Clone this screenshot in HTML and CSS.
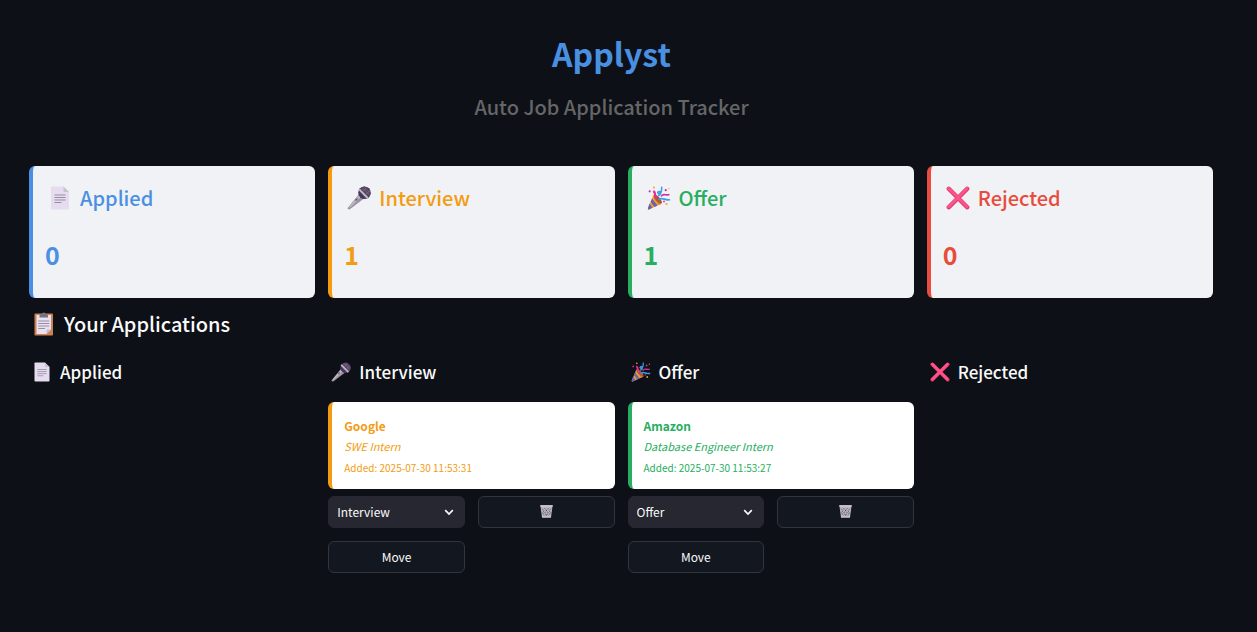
FILE: index.html
```
<!DOCTYPE html>
<html lang="en">
<head>
<meta charset="utf-8">
<meta name="viewport" content="width=device-width, initial-scale=1">
<title>Applyst</title>
<link rel="stylesheet" href="styles.css">
</head>
<body>
<svg class="sprite" aria-hidden="true">
  <symbol id="page" viewBox="0 0 24 24">
    <path d="M3 1.5Q3 .5 4 .5H15.500L21 6V22.500Q21 23.500 20 23.500H4Q3 23.500 3 22.500Z" fill="#e6dcef"/>
    <path d="M15.500.5 21 6H16.500Q15.500 6 15.500 5Z" fill="#c9c0d0"/>
    <path d="M6.500 9H17.500M6.500 11.500H17.500M6.500 14H17.500M6.500 16.500H13.500" stroke="#998ea4" stroke-width="1"/>
  </symbol>
  <symbol id="mic" viewBox="0 0 24 24">
    <path d="M1 21.500 12.500 7.500 17 12.500 3.500 22.800Q2 24 .8 22.800.3 22.300 1 21.500Z" fill="#9b92a2"/>
    <path d="M2 21 12.800 8.500 14.500 10.300 2.800 21.800Z" fill="#c2bcc7"/>
    <path d="M8.500 14.500 10.500 12.500" stroke="#655b70" stroke-width="1.400"/>
    <circle cx="17.500" cy="6.800" r="6.300" fill="#46355a"/>
    <path d="M12.500 3.500Q14.500.8 17.500.6L23.600 7Q23.300 10 21 12Z" fill="#57465f"/>
    <path d="M12.200 3.400 20.800 12.200" stroke="#c0b9c8" stroke-width="2"/>
    <path d="M15.500 2 22 8.500M18 1.500 23 6.500M16 5 20 1.500M19 8 23 4.500" stroke="#80708b" stroke-width=".7"/>
  </symbol>
  <symbol id="party" viewBox="0 0 24 24">
    <path d="M6.500 9Q12 11 15 17.500L2 23.500Q.5 24 1 22Z" fill="#f5a12b"/>
    <path d="M5 12.500 10.500 19.500 7.500 21 3.600 16ZM2.500 17.500 5.500 21.800 2 23.500Q.5 24 1 22Z" fill="#6763b5"/>
    <path d="M8 10.500 14 18 12 18.900 6.500 12Z" fill="#dd7f35"/>
    <ellipse cx="10.800" cy="13" rx="2.100" ry="5.600" transform="rotate(-43 10.800 13)" fill="#a75a35"/>
    <path d="M10 12.500C6 9 10 7.500 6.300 5" fill="none" stroke="#f02a91" stroke-width="2.200"/>
    <path d="M12 14C14 10 19 15.500 23 13.500" fill="none" stroke="#3a9de8" stroke-width="1.900"/>
    <path d="M14 10.500C16 6.500 19 10 22.500 8.500" fill="none" stroke="#cf329d" stroke-width="1.600"/>
    <path d="M11 10C15 8 14.500 5 12 5.500 9 6.500 12 9 14 6 15.300 4 14 2 15 .8" fill="none" stroke="#3a9de8" stroke-width="1.500"/>
    <circle cx="2.700" cy="5.300" r="1.100" fill="#d42d93"/><circle cx="7" cy="1.600" r="1" fill="#f5a12b"/>
    <circle cx="18.700" cy="4.200" r="1.100" fill="#d42d93"/><circle cx="22" cy="2.600" r=".7" fill="#f5a12b"/>
    <circle cx="19.500" cy="18" r="1.100" fill="#f5a12b"/><circle cx="17" cy="15.500" r=".9" fill="#f02a91"/>
  </symbol>
  <symbol id="cross" viewBox="0 0 24 24">
    <path d="M2.800 2.800 21.200 21.200M21.200 2.800 2.800 21.200" stroke="#e63268" stroke-width="4.400" stroke-linecap="round"/>
    <path d="M2.800 2.500 21 20.700M21 2.500 2.800 20.700" stroke="#fa558a" stroke-width="3" stroke-linecap="round"/>
  </symbol>
  <symbol id="clipboard" viewBox="0 0 24 24">
    <rect x="2.500" y="1.500" width="18.500" height="22" rx="1" fill="#cf8050"/>
    <path d="M4.500 3H19V17.500L14.500 22H4.500Z" fill="#e9e1f0"/>
    <path d="M19 17.500H15.500Q14.500 17.500 14.500 18.500V22Z" fill="#c6b9d0"/>
    <path d="M7.500 5.500V3.500Q7.500 2.300 9.500 2.300 10 .5 11.800.5T14 2.300Q16 2.300 16 3.500V5.500Z" fill="#777080"/>
    <path d="M6.200 9H17.300M6.200 11.500H17.300M6.200 14H17.300M6.200 16.500H13" stroke="#998ea4"/>
  </symbol>
  <symbol id="bin" viewBox="0 0 16 16">
    <path d="M1.500 1.500H14.500L12.800 14.500H3.200Z" fill="#b9b2c1"/>
    <path d="M3.300 5 5.300 7.200 3.800 9.500 5.500 12M6 4.500 8 7 6.200 9.500 8 12.200M12.700 5 10.700 7.200 12.200 9.500 10.500 12M10 4.500 8 7 9.800 9.500 8 12.200" fill="none" stroke="#514a5b" stroke-width="1" stroke-dasharray="1.600 1"/>
    <path d="M1.300 2H14.700" stroke="#d8d2de" stroke-width="1.400"/>
    <path d="M3.200 13.900H12.800" stroke="#d8d2de"/>
  </symbol>
  <symbol id="chevron" viewBox="0 0 10 10">
    <path d="M1.200 3.200 5 7 8.800 3.200" fill="none" stroke="currentColor" stroke-width="1.700"/>
  </symbol>
</svg>

<main class="page">
  <header class="masthead">
    <h1 class="brand">Applyst</h1>
    <h3 class="tagline">Auto Job Application Tracker</h3>
  </header>

  <section class="columns" aria-label="Totals">
    <article class="metric applied">
      <h3 class="metric-title"><svg class="emoji"><use href="#page"/></svg>Applied</h3>
      <p class="metric-value">0</p>
    </article>
    <article class="metric interview">
      <h3 class="metric-title"><svg class="emoji"><use href="#mic"/></svg>Interview</h3>
      <p class="metric-value">1</p>
    </article>
    <article class="metric offer">
      <h3 class="metric-title"><svg class="emoji"><use href="#party"/></svg>Offer</h3>
      <p class="metric-value">1</p>
    </article>
    <article class="metric rejected">
      <h3 class="metric-title"><svg class="emoji"><use href="#cross"/></svg>Rejected</h3>
      <p class="metric-value">0</p>
    </article>
  </section>

  <h2 class="section-title"><svg class="emoji"><use href="#clipboard"/></svg>Your Applications</h2>

  <section class="columns" aria-label="Board">
    <div class="lane">
      <h4 class="lane-title"><svg class="emoji-small"><use href="#page"/></svg>Applied</h4>
    </div>
    <div class="lane">
      <h4 class="lane-title"><svg class="emoji-small"><use href="#mic"/></svg>Interview</h4>
      <article class="job interview">
        <strong class="company">Google</strong>
        <em class="role">SWE Intern</em>
        <small class="added">Added: 2025-07-30 11:53:31</small>
      </article>
      <div class="actions">
        <div class="picker">
          <select class="status" aria-label="Status for Google">
            <option>Applied</option><option selected>Interview</option><option>Offer</option><option>Rejected</option>
          </select>
          <svg class="chevron"><use href="#chevron"/></svg>
        </div>
        <button class="button" type="button" aria-label="Delete Google"><svg class="bin"><use href="#bin"/></svg></button>
        <button class="button" type="button">Move</button>
      </div>
    </div>
    <div class="lane">
      <h4 class="lane-title"><svg class="emoji-small"><use href="#party"/></svg>Offer</h4>
      <article class="job offer">
        <strong class="company">Amazon</strong>
        <em class="role">Database Engineer Intern</em>
        <small class="added">Added: 2025-07-30 11:53:27</small>
      </article>
      <div class="actions">
        <div class="picker">
          <select class="status" aria-label="Status for Amazon">
            <option>Applied</option><option>Interview</option><option selected>Offer</option><option>Rejected</option>
          </select>
          <svg class="chevron"><use href="#chevron"/></svg>
        </div>
        <button class="button" type="button" aria-label="Delete Amazon"><svg class="bin"><use href="#bin"/></svg></button>
        <button class="button" type="button">Move</button>
      </div>
    </div>
    <div class="lane">
      <h4 class="lane-title"><svg class="emoji-small"><use href="#cross"/></svg>Rejected</h4>
    </div>
  </section>
</main>
</body>
</html>
```
FILE: styles.css
```
* { box-sizing: border-box; }

body {
  margin: 0;
  background: #0d1117;
  color: #fafafa;
  font-family: "Noto Sans CJK SC", "Noto Sans", sans-serif;
  font-size: 12px;
}

h1, h2, h3, h4, p { margin: 0; font-weight: 500; }

.sprite { position: absolute; width: 0; height: 0; }

.page { padding: 31px 44px 32px 29px; }

.masthead {
  padding-right: 19px;
  margin-bottom: 43px;
  text-align: center;
}

.brand {
  color: #4a90e2;
  font-size: 32px;
  font-weight: 700;
  line-height: 44px;
}

.tagline {
  margin-top: 16px;
  color: #666;
  font-size: 20px;
  line-height: 32px;
}

.columns {
  display: grid;
  grid-template-columns: repeat(4, minmax(0, 1fr));
  gap: 13px;
}

.applied { --tone: #4a90e2; }
.interview { --tone: #f39c12; }
.offer { --tone: #27ae60; }
.rejected { --tone: #e74c3c; }

.metric, .job {
  border-left: 4px solid var(--tone);
  border-radius: 6px;
  color: var(--tone);
}

.metric {
  padding: 16px 13px 24px 12px;
  background: #f0f2f6;
}

.metric-title, .section-title, .lane-title {
  display: flex;
  align-items: center;
  gap: 8px;
  padding-left: 3px;
}

.metric-title, .section-title { font-size: 20px; line-height: 32px; }

.metric-value {
  margin-top: 20px;
  font-size: 25px;
  font-weight: 700;
  line-height: 40px;
}

.section-title { margin: 10px 0 16px; }

.lane-title {
  margin-bottom: 14px;
  font-size: 17px;
  line-height: 32px;
}

.emoji { width: 24px; height: 24px; }
.emoji-small { width: 20px; height: 20px; }

.job {
  display: flex;
  flex-direction: column;
  padding: 13px 13px 11px 12px;
  background: #fff;
  line-height: 21px;
}

.company { font-weight: 700; }
.role { font-size: 11px; }
.added { font-size: 10px; }

.actions {
  display: grid;
  grid-template-columns: repeat(2, minmax(0, 1fr));
  gap: 13px;
  margin-top: 7px;
}

.picker { position: relative; }

.status, .button {
  width: 100%;
  height: 32px;
  border: 1px solid #31353d;
  border-radius: 6px;
  background: #131720;
  color: inherit;
  font: inherit;
}

.status {
  padding: 0 28px 2px 8px;
  border-color: #262730;
  background: #262730;
  appearance: none;
}

.chevron {
  position: absolute;
  top: 11px;
  right: 11px;
  width: 10px;
  height: 10px;
  pointer-events: none;
}

.button {
  display: flex;
  align-items: center;
  justify-content: center;
  padding: 0 0 2px;
}

.bin { width: 15px; height: 15px; }
```
